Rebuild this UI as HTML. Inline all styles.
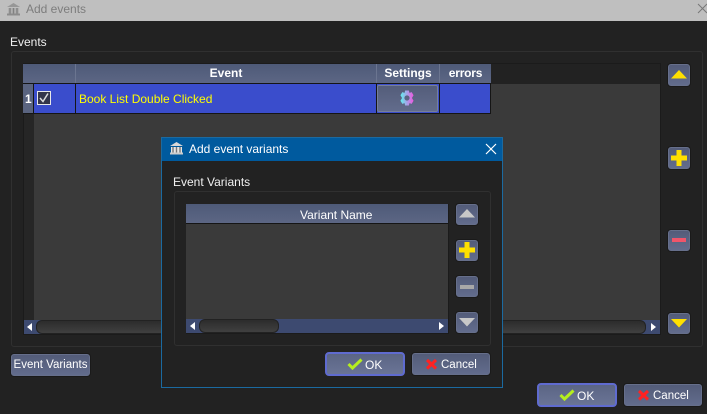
<!DOCTYPE html>
<html><head><meta charset="utf-8"><style>
html,body{margin:0;padding:0;width:707px;height:414px;overflow:hidden;background:#222}
*{box-sizing:border-box}
body{position:relative;font-family:"Liberation Sans",sans-serif;font-size:12px;color:#f0f0f0}
.a{position:absolute}
.t{position:absolute;white-space:nowrap;line-height:14px}
.btn{position:absolute;border:1px solid #666f8b;border-radius:3px;background:linear-gradient(#535c79,#626c8c);box-shadow:0 0 0 1px #1a1a1a}
.b2{position:absolute;background:linear-gradient(#5b6584,#6a7496);border:2px solid #5f6bd0;border-radius:4px}
.cap{position:absolute;left:0;right:0;top:0;bottom:0;text-align:center;font-weight:bold;color:#fff;line-height:19px;font-size:12px}
.hd{position:absolute;top:64px;height:19px;background:linear-gradient(#4e5a78,#5c6684);border-left:1px solid #6b7590}
svg{position:absolute;overflow:visible}
</style></head><body>
<div class="a" style="left:0;top:0;width:707px;height:21px;background:#bfbfbf"></div>
<svg style="left:7px;top:3px" width="13" height="13" viewBox="0 0 13 13"><path d="M6.500 0L13 4H0z" fill="#979797"/><path d="M1 5h11v6H1z" fill="#b0b0b0"/><path d="M3 5v6M6.500 5v6M10 5v6" stroke="#808080" stroke-width="1.400"/><path d="M0 11.500h13" stroke="#8c8c8c" stroke-width="2"/></svg>
<div class="t" style="left:26px;top:2px;color:#7d7d7d">Add events</div>
<svg style="left:697px;top:3px" width="10" height="12"><path d="M1 1l9 9M10 1l-9 9" stroke="#777" stroke-width="1" fill="none"/></svg>

<div class="t" style="left:10px;top:35px">Events</div>
<div class="a" style="left:11px;top:51px;width:692px;height:296px;border:1px solid #303030;border-radius:3px"></div>

<!-- main table -->
<div class="a" style="left:23px;top:63px;width:638px;height:272px;background:#3a3a3a;border:1px solid #1b1b1b"></div>
<div class="a" style="left:24px;top:64px;width:636px;height:20px;background:#222"></div>
<div class="a" style="left:24px;top:114px;width:10px;height:206px;background:#262626"></div>
<div class="hd" style="left:23px;width:52px;border-left:0"></div>
<div class="hd" style="left:75px;width:301px"><div class="cap">Event</div></div>
<div class="hd" style="left:376px;width:63px"><div class="cap">Settings</div></div>
<div class="hd" style="left:439px;width:52px"><div class="cap" style="letter-spacing:-.2px">errors</div></div>
<div class="a" style="left:23px;top:83px;width:468px;height:31px;background:#151515"></div>
<div class="a" style="left:23px;top:84px;width:10px;height:29px;background:#5a6480"></div>
<div class="t" style="left:25px;top:92px;font-weight:bold;color:#fff">1</div>
<div class="a" style="left:34px;top:84px;width:41px;height:29px;background:#3a4dcc"></div>
<div class="a" style="left:76px;top:84px;width:300px;height:29px;background:#3a4dcc"></div>
<div class="a" style="left:377px;top:84px;width:62px;height:29px;background:#3a4dcc"></div>
<div class="a" style="left:440px;top:84px;width:50px;height:29px;background:#3a4dcc"></div>
<div class="a" style="left:37px;top:91px;width:14px;height:14px;border:1px solid #e8e8e8;background:#33354a"></div>
<svg style="left:39px;top:93px" width="10" height="10"><path d="M1 5l3 3.500L9 .5" stroke="#ddd" stroke-width="1.500" fill="none"/></svg>
<div class="t" style="left:79px;top:92px;color:#ffff00">Book List Double Clicked</div>
<div class="a" style="left:377px;top:85px;width:61px;height:27px;border:1px solid #767f9a;border-radius:2px;background:linear-gradient(#545d7a,#626c8c)"></div>
<svg style="left:400px;top:90px" width="14" height="16" viewBox="0 0 15 16"><defs><linearGradient id="g"><stop offset="0" stop-color="#5ff0ee"/><stop offset="1" stop-color="#ee55e0"/></linearGradient></defs><path fill="url(#g)" fill-rule="evenodd" d="M5.500 0h4l.6 2.500 2.400-.8L14.500 5l-1.700 3 1.700 3-2 3.300-2.400-.8L9.500 16h-4l-.6-2.500-2.400.8L.5 11l1.700-3L.5 5l2-3.300 2.400.8zM7.500 5.200a2.800 2.800 0 1 0 .01 0z"/></svg>

<!-- scrollbar main -->
<div class="a" style="left:24px;top:320px;width:636px;height:14px;background:#3d4a70"></div>
<div class="a" style="left:36px;top:320px;width:610px;height:14px;border:1px solid #222;border-radius:6px;background:linear-gradient(#2c2c2c,#404040)"></div>
<svg style="left:27px;top:323px" width="6" height="8"><path d="M5 0v8L0 4z" fill="#fff"/></svg>
<svg style="left:651px;top:323px" width="6" height="8"><path d="M0 0v8l5-4z" fill="#fff"/></svg>

<!-- right buttons -->
<div class="btn" style="left:668px;top:64px;width:22px;height:22px"></div>
<svg style="left:671px;top:70px" width="16" height="9"><path d="M8 0l8 8.500H0z" fill="#ffe000"/></svg>
<div class="btn" style="left:668px;top:147px;width:22px;height:22px"></div>
<svg style="left:671px;top:150px" width="16" height="16"><path d="M5.500 0h5v5.500H16v5h-5.500V16h-5v-5.500H0v-5h5.500z" fill="#ffe000"/></svg>
<div class="btn" style="left:668px;top:230px;width:22px;height:21px"></div>
<div class="a" style="left:672px;top:238px;width:14px;height:4px;background:#f0556a"></div>
<div class="btn" style="left:668px;top:313px;width:22px;height:21px"></div>
<svg style="left:671px;top:319px" width="16" height="9"><path d="M0 0h16L8 8.500z" fill="#ffe000"/></svg>

<!-- bottom main -->
<div class="btn" style="left:11px;top:354px;width:79px;height:22px"><div class="t" style="left:0;right:0;top:3px;text-align:center;color:#fff;font-size:11.500px">Event Variants</div></div>
<div class="b2" style="left:537px;top:383px;width:80px;height:24px"></div>
<svg style="left:559px;top:389px" width="16" height="12"><path d="M1.500 6l4 4L14.500 1.500" stroke="#b5ee1e" stroke-width="3" fill="none"/></svg>
<div class="t" style="left:577px;top:389px;color:#fff">OK</div>
<div class="btn" style="left:624px;top:384px;width:78px;height:22px"></div>
<svg style="left:638px;top:390px" width="12" height="11"><path d="M1 1l9 8.500M10 1L1 9.500" stroke="#ff2222" stroke-width="3" fill="none"/></svg>
<div class="t" style="left:653px;top:389px;color:#fff;font-size:11.500px">Cancel</div>

<!-- dialog -->
<div class="a" style="left:161px;top:137px;width:342px;height:251px;background:#222;border:1px solid #1b6aa0"></div>
<div class="a" style="left:162px;top:138px;width:340px;height:23px;background:#005a9e"></div>
<svg style="left:170px;top:142px" width="13" height="13" viewBox="0 0 13 13"><path d="M6.500 0L13 4H0z" fill="#d8d8d8"/><path d="M1 5h11v6H1z" fill="#e6e6e6"/><path d="M3 5v6M6.500 5v6M10 5v6" stroke="#777" stroke-width="1.400"/><path d="M0 11.500h13" stroke="#ccc" stroke-width="2"/></svg>
<div class="t" style="left:189px;top:142px;color:#fff">Add event variants</div>
<svg style="left:485px;top:143px" width="12" height="12"><path d="M1 1l10 10M11 1L1 11" stroke="#fff" stroke-width="1.200" fill="none"/></svg>
<div class="t" style="left:173px;top:175px">Event Variants</div>
<div class="a" style="left:174px;top:191px;width:317px;height:155px;border:1px solid #303030;border-radius:3px"></div>

<div class="a" style="left:186px;top:204px;width:263px;height:130px;background:#3a3a3a;border-right:1px solid #1b1b1b;border-bottom:1px solid #1b1b1b"></div>
<div class="a" style="left:186px;top:204px;width:262px;height:20px;background:linear-gradient(#4e5a78,#5c6684);border-bottom:1px solid #151515"></div>
<div class="t" style="left:300px;top:208px;color:#fff">Variant Name</div>
<div class="a" style="left:186px;top:319px;width:262px;height:14px;background:#3d4a70"></div>
<div class="a" style="left:199px;top:319px;width:80px;height:14px;border:1px solid #222;border-radius:6px;background:linear-gradient(#2c2c2c,#404040)"></div>
<svg style="left:190px;top:322px" width="6" height="8"><path d="M5 0v8L0 4z" fill="#fff"/></svg>
<svg style="left:439px;top:322px" width="6" height="8"><path d="M0 0v8l5-4z" fill="#fff"/></svg>

<div class="btn" style="left:456px;top:204px;width:22px;height:21px"></div>
<svg style="left:459px;top:209px" width="16" height="9"><path d="M8 0l8 8.500H0z" fill="#c8c8c8"/></svg>
<div class="btn" style="left:456px;top:240px;width:22px;height:21px"></div>
<svg style="left:459px;top:242px" width="16" height="16"><path d="M5.500 0h5v5.500H16v5h-5.500V16h-5v-5.500H0v-5h5.500z" fill="#ffe000"/></svg>
<div class="btn" style="left:456px;top:276px;width:22px;height:21px"></div>
<div class="a" style="left:460px;top:285px;width:14px;height:4px;background:#a8a8a8"></div>
<div class="btn" style="left:456px;top:312px;width:22px;height:21px"></div>
<svg style="left:459px;top:318px" width="16" height="9"><path d="M0 0h16L8 8.500z" fill="#c8c8c8"/></svg>

<div class="b2" style="left:325px;top:352px;width:80px;height:24px"></div>
<svg style="left:347px;top:358px" width="16" height="12"><path d="M1.500 6l4 4L14.500 1.500" stroke="#b5ee1e" stroke-width="3" fill="none"/></svg>
<div class="t" style="left:365px;top:358px;color:#fff">OK</div>
<div class="btn" style="left:412px;top:353px;width:78px;height:22px"></div>
<svg style="left:426px;top:359px" width="12" height="11"><path d="M1 1l9 8.500M10 1L1 9.500" stroke="#ff2222" stroke-width="3" fill="none"/></svg>
<div class="t" style="left:441px;top:358px;color:#fff;font-size:11.500px">Cancel</div>
</body></html>
